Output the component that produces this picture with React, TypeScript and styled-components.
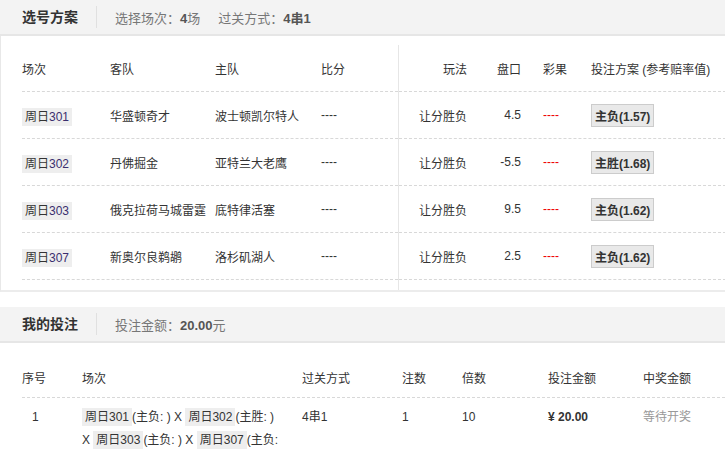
import React from "react";
import styled, { createGlobalStyle } from "styled-components";

const G = createGlobalStyle`
  body { margin:0; background:#fff; font-family:"Liberation Sans","Noto Sans CJK SC",sans-serif; font-size:12px; color:#333; }
`;
const Page = styled.div`width:725px; overflow:hidden;`;
const Bar = styled.div`
  height:34px; background:#f3f3f3; border-bottom:2px solid #e6e6e6;
  display:flex; align-items:center; padding-left:22px; white-space:nowrap;
`;
const BarTitle = styled.div`font-size:14px; font-weight:bold; color:#333; padding-right:18px; border-right:1px solid #e0e0e0; line-height:22px;`;
const BarInfo = styled.div`font-size:13px; color:#777; padding-left:18px; display:flex; gap:18px; b{color:#555;}`;
const Panel = styled.div`
  border-left:1px solid #e8e8e8; border-bottom:2px solid #ececec;
  margin-bottom:15px; background:#fff; display:flex; padding-top:9px;
`;
const Half = styled.div<{ $w: number; $border?: boolean }>`
  width:${p => p.$w}px; flex:none; padding-bottom:10px;
  ${p => p.$border ? "border-right:1px solid #e6e6e6;" : ""}
`;
const Row = styled.div<{ $cols: string; $h: number; $pad?: number }>`
  display:grid; grid-template-columns:${p => p.$cols}; height:${p => p.$h}px;
  align-items:center; border-bottom:1px dashed #d8d8d8; margin-left:${p => p.$pad ?? 0}px; white-space:nowrap;
`;
const Cell = styled.div<{ $right?: boolean; $red?: boolean; $muted?: boolean; $indent?: number }>`
  ${p => p.$right ? "text-align:right;" : ""}
  padding-left:${p => p.$indent ?? 0}px;
  color:${p => (p.$red ? "#e00" : p.$muted ? "#999" : "#333")};
`;
const Tag = styled.span`background:#eee; padding:2px 3px; color:#333; span{color:#3a2e6e;}`;
const Btn = styled.span`
  display:inline-block; background:#e9e9e9; border:1px solid #ccc; padding:2px 3px;
  font-weight:bold; font-size:12px; color:#333;
`;
const BRow = styled.div`
  display:grid; grid-template-columns:60px 220px 100px 60px 86px 95px 82px;
  margin-left:22px; white-space:nowrap; align-items:center;
`;
const BHead = styled(BRow)`height:40px; border-bottom:1px dashed #d8d8d8; margin-top:14px;`;
const BBody = styled(BRow)`align-items:start; padding-top:8px; line-height:23px;`;
const Wrap = styled.div`white-space:normal; width:200px;`;

const rows = [
  ["301", "华盛顿奇才", "波士顿凯尔特人", "4.5", "主负(1.57)"],
  ["302", "丹佛掘金", "亚特兰大老鹰", "-5.5", "主胜(1.68)"],
  ["303", "俄克拉荷马城雷霆", "底特律活塞", "9.5", "主负(1.62)"],
  ["307", "新奥尔良鹈鹕", "洛杉矶湖人", "2.5", "主负(1.62)"],
];
const L = "88px 105px 106px 76px";
const R = "68px 54px 70px 140px";

export default function App() {
  return (
    <Page>
      <G />
      <Bar>
        <BarTitle>选号方案</BarTitle>
        <BarInfo><span>选择场次：<b>4</b>场</span><span>过关方式：<b>4串1</b></span></BarInfo>
      </Bar>
      <Panel>
        <Half $w={397} $border>
          <Row $cols={L} $h={46} $pad={21}><Cell>场次</Cell><Cell>客队</Cell><Cell>主队</Cell><Cell>比分</Cell></Row>
          {rows.map(r => (
            <Row key={r[0]} $cols={L} $h={46} $pad={21}>
              <Cell><Tag>周日<span>{r[0]}</span></Tag></Cell><Cell>{r[1]}</Cell><Cell>{r[2]}</Cell><Cell>----</Cell>
            </Row>
          ))}
        </Half>
        <Half $w={327}>
          <Row $cols={R} $h={46}><Cell $right>玩法</Cell><Cell $right>盘口</Cell><Cell $indent={22}>彩果</Cell><Cell>投注方案 (参考赔率值)</Cell></Row>
          {rows.map(r => (
            <Row key={r[0]} $cols={R} $h={46}>
              <Cell $right>让分胜负</Cell><Cell $right>{r[3]}</Cell><Cell $red $indent={22}>----</Cell><Cell><Btn>{r[4]}</Btn></Cell>
            </Row>
          ))}
        </Half>
      </Panel>
      <Bar>
        <BarTitle>我的投注</BarTitle>
        <BarInfo><span>投注金额：<b>20.00</b>元</span></BarInfo>
      </Bar>
      <BHead><Cell>序号</Cell><Cell>场次</Cell><Cell>过关方式</Cell><Cell>注数</Cell><Cell>倍数</Cell><Cell>投注金额</Cell><Cell>中奖金额</Cell></BHead>
      <BBody>
        <Cell $indent={10}>1</Cell>
        <Wrap><Tag>周日301</Tag>(主负: ) X <Tag>周日302</Tag>(主胜: ) X <Tag>周日303</Tag>(主负: ) X <Tag>周日307</Tag>(主负: )</Wrap>
        <Cell>4串1</Cell><Cell>1</Cell><Cell>10</Cell><Cell><b>¥ 20.00</b></Cell><Cell $muted>等待开奖</Cell>
      </BBody>
    </Page>
  );
}
